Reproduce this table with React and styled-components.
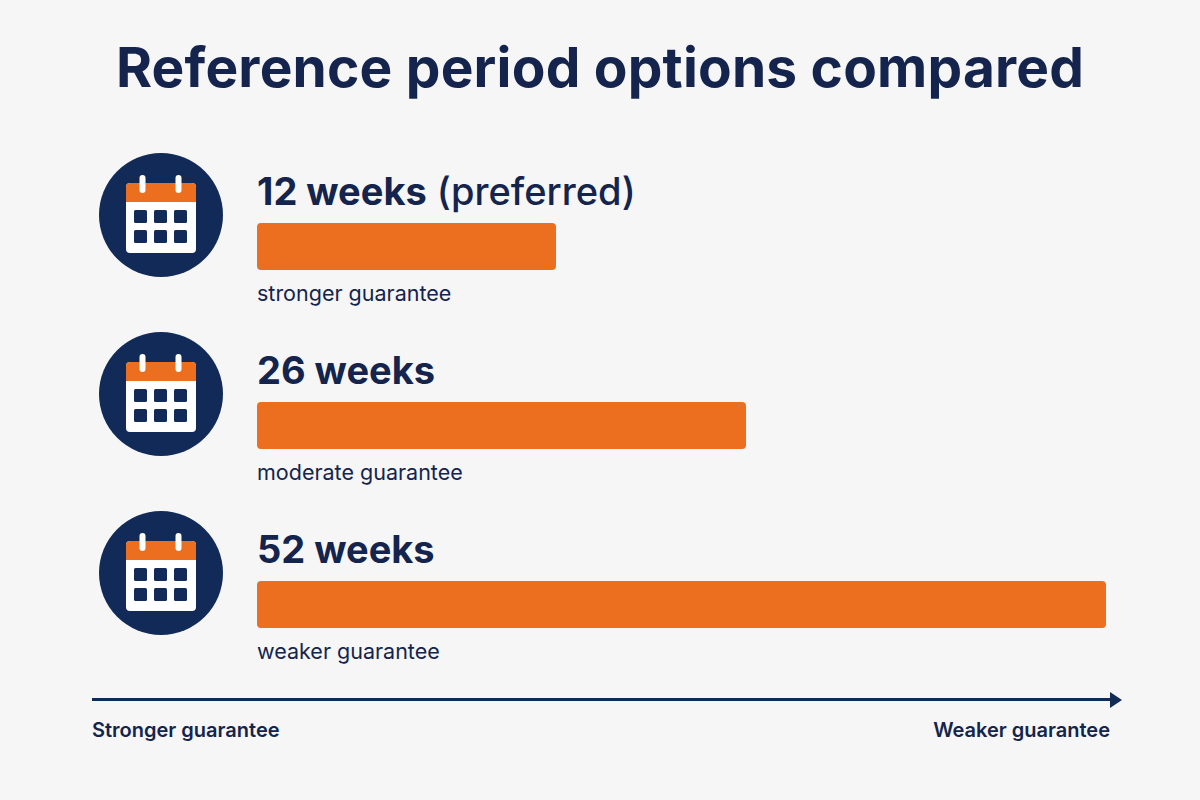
import React from "react";
import styled, { createGlobalStyle } from "styled-components";

const NAVY = "#112a57";
const INK = "#14244c";
const ORANGE = "#eb6f1e";

const GlobalStyle = createGlobalStyle`
  html, body {
    margin: 0;
    padding: 0;
    background: #f6f6f7;
  }
  body {
    font-family: Inter, "Noto Sans", "Liberation Sans", sans-serif;
    color: ${INK};
  }
`;

const Page = styled.div`
  width: 1200px;
  height: 800px;
  box-sizing: border-box;
  padding: 35px 0 0;
  display: flex;
  flex-direction: column;
`;

const Title = styled.h1`
  margin: 0;
  text-align: center;
  font-size: 55px;
  line-height: 64px;
  font-weight: 700;
  letter-spacing: 0.2px;
  color: ${INK};
`;

const Rows = styled.div`
  margin-top: 54px;
  padding-left: 99px;
  display: flex;
  flex-direction: column;
  gap: 26px;
`;

const Row = styled.div`
  display: grid;
  grid-template-columns: 124px 1fr;
  column-gap: 34px;
  align-items: start;
`;

const IconCircle = styled.div`
  width: 124px;
  height: 124px;
  border-radius: 50%;
  background: ${NAVY};
  display: flex;
  align-items: center;
  justify-content: center;
`;

const Content = styled.div`
  margin-top: 16px;
  display: flex;
  flex-direction: column;
`;

const Label = styled.div`
  font-size: 38px;
  line-height: 44px;
  font-weight: 700;
  color: ${INK};
  strong {
    font-weight: 700;
  }
  span {
    font-weight: 500;
  }
`;

const Bar = styled.div`
  margin-top: 10px;
  height: 47px;
  border-radius: 4px;
  background: ${ORANGE};
`;

const Sub = styled.div`
  margin-top: 10px;
  font-size: 21.5px;
  line-height: 26px;
  font-weight: 400;
  color: ${INK};
`;

const Axis = styled.div`
  margin-top: 34px;
  padding: 0 82px 0 92px;
  display: flex;
  flex-direction: column;
`;

const AxisLine = styled.div`
  position: relative;
  height: 3px;
  background: ${NAVY};
  margin-right: 6px;
  &::after {
    content: "";
    position: absolute;
    right: -10px;
    top: -6.5px;
    border-left: 12px solid ${NAVY};
    border-top: 8px solid transparent;
    border-bottom: 8px solid transparent;
  }
`;

const AxisLabels = styled.div`
  margin-top: 17px;
  display: flex;
  justify-content: space-between;
  padding-right: 8px;
  font-size: 20px;
  line-height: 24px;
  font-weight: 600;
  color: ${INK};
`;

const CalendarIcon = () => (
  <svg width="72" height="80" viewBox="0 0 72 80">
    <rect x="1" y="8" width="70" height="70" rx="4" fill="#fff" />
    <path d="M5 8h62a4 4 0 0 1 4 4v15H1V12a4 4 0 0 1 4-4z" fill={ORANGE} />
    <rect x="14.5" y="0" width="6" height="18" rx="3" fill="#fff" />
    <rect x="50.5" y="0" width="6" height="18" rx="3" fill="#fff" />
    {[0, 1].map((r) =>
      [0, 1, 2].map((c) => (
        <rect
          key={`${r}-${c}`}
          x={9 + c * 20}
          y={35 + r * 20}
          width="13"
          height="13"
          rx="1.5"
          fill={NAVY}
        />
      ))
    )}
  </svg>
);

const options = [
  { weeks: "12 weeks", note: " (preferred)", width: 299, sub: "stronger guarantee" },
  { weeks: "26 weeks", note: "", width: 489, sub: "moderate guarantee" },
  { weeks: "52 weeks", note: "", width: 849, sub: "weaker guarantee" },
];

const App = () => (
  <>
    <GlobalStyle />
    <Page>
      <Title>Reference period options compared</Title>
      <Rows>
        {options.map((o) => (
          <Row key={o.weeks}>
            <IconCircle>
              <CalendarIcon />
            </IconCircle>
            <Content>
              <Label>
                <strong>{o.weeks}</strong>
                {o.note && <span>{o.note}</span>}
              </Label>
              <Bar style={{ width: o.width }} />
              <Sub>{o.sub}</Sub>
            </Content>
          </Row>
        ))}
      </Rows>
      <Axis>
        <AxisLine />
        <AxisLabels>
          <span>Stronger guarantee</span>
          <span>Weaker guarantee</span>
        </AxisLabels>
      </Axis>
    </Page>
  </>
);

export default App;
